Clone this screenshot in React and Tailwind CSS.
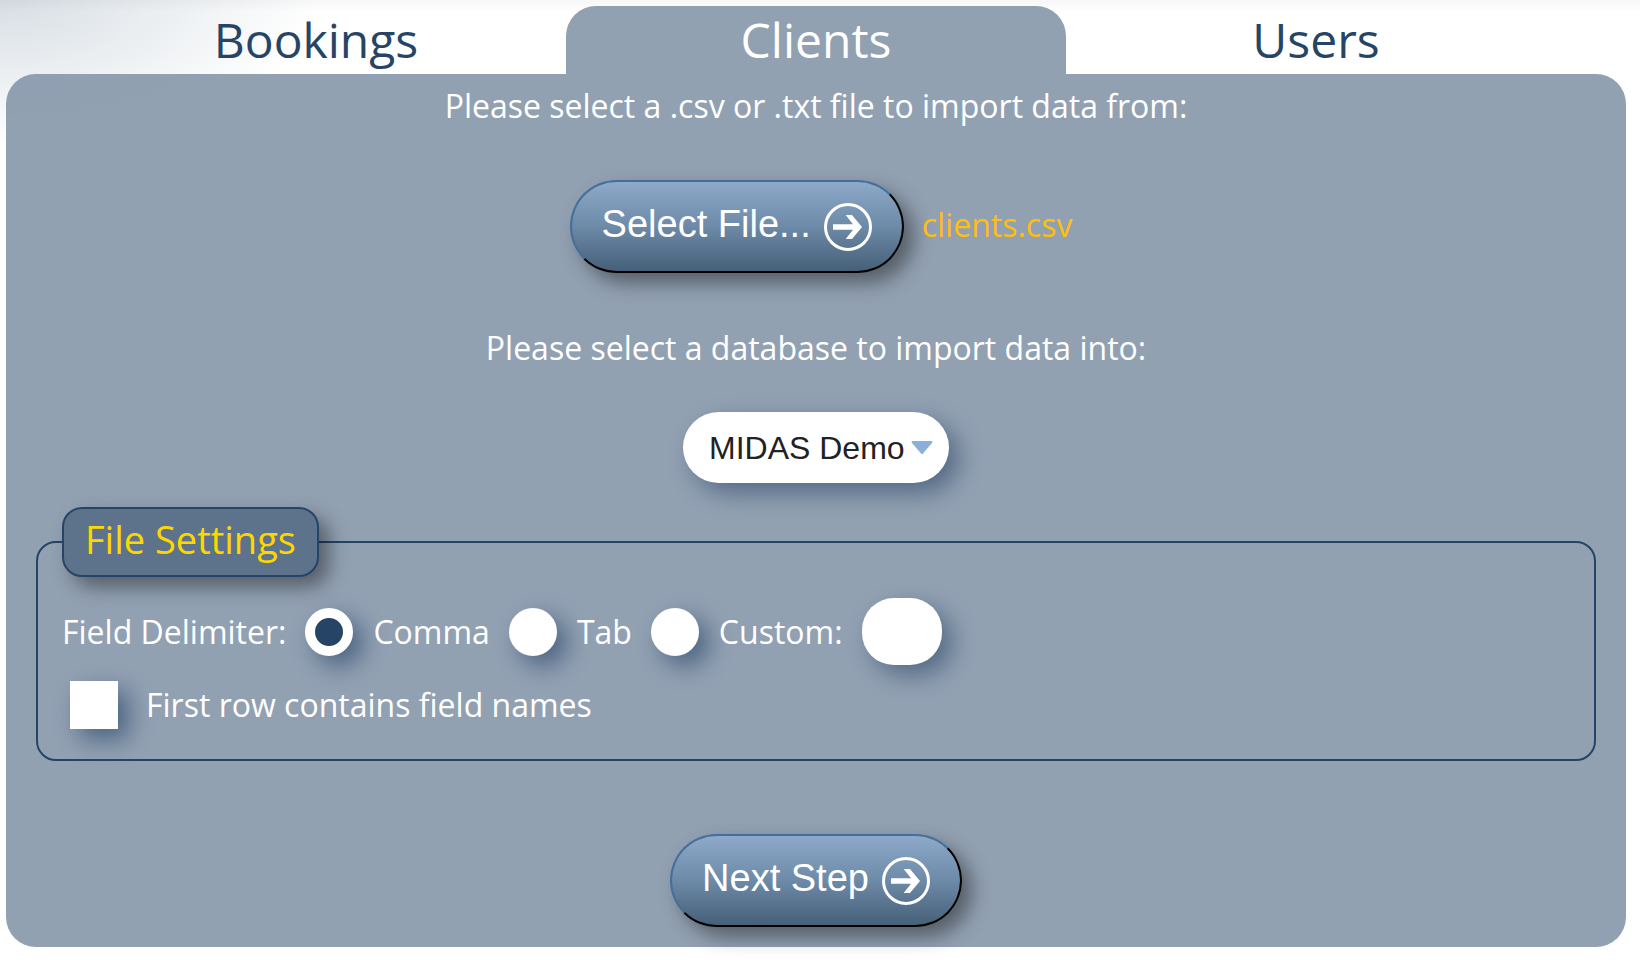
import React, { useState } from "react";

const TABS = ["Bookings", "Clients", "Users"];

const ArrowIcon = () => (
  <svg viewBox="0 0 48 48" className="size-12 shrink-0" fill="none" aria-hidden="true">
    <circle cx="24" cy="24" r="22.5" stroke="white" strokeWidth="3" />
    <path d="M9 21.2h20L21.700 12H28l10 12-10 12h-6.300L29 26.800H9z" fill="white" />
  </svg>
);

const ActionButton = ({ children, ...props }) => (
  <button
    type="button"
    className="flex items-center gap-[13px] h-[93px] px-[30px] rounded-full border-2 border-t-[#446e9b] border-l-[#446e9b] border-r-black border-b-black bg-linear-to-b from-[#8ea9c9] via-[#6d8aa8] to-[#466079] font-['Liberation_Sans',Arial,sans-serif] text-[38px] leading-none text-white shadow-[10px_10px_20px_rgba(0,0,0,0.42)] cursor-pointer"
    {...props}
  >
    <span className="pb-1.5">{children}</span>
    <ArrowIcon />
  </button>
);

const Radio = ({ label, ...props }) => (
  <label className="flex items-center gap-5">
    <input
      type="radio"
      name="delimiter"
      className="appearance-none size-12 rounded-full border-10 border-white bg-white checked:bg-[#264566] shadow-[10px_10px_25px_#4a6280]"
      {...props}
    />
    <span>{label}</span>
  </label>
);

const App = () => {
  const [tab, setTab] = useState("Clients");
  const [delimiter, setDelimiter] = useState("comma");
  const [custom, setCustom] = useState("");
  const [hasHeader, setHasHeader] = useState(false);

  return (
    <div className="min-h-screen pt-1.5 pl-1.5 pr-3.5 pb-3 bg-white bg-[linear-gradient(rgba(0,0,0,0.03),transparent_12px),radial-gradient(ellipse_320px_145px_at_0_0,#d7dee4,#ffffff)] font-['Open_Sans',sans-serif] text-[32px] leading-11 text-white">
      <nav className="flex px-15">
        {TABS.map((t) => (
          <button
            key={t}
            type="button"
            onClick={() => setTab(t)}
            className={`flex-1 h-17 rounded-t-[30px] text-5xl leading-17 cursor-pointer ${
              t === tab ? "bg-[#92a1b2] text-white" : "text-[#264566]"
            }`}
          >
            {t}
          </button>
        ))}
      </nav>

      <main className="flex flex-col items-center rounded-[30px] bg-[rgba(127,144,164,0.85)] px-[30px] pt-[10px] pb-5">
        <p>Please select a .csv or .txt file to import data from:</p>

        <div className="flex items-center gap-[18px] mt-[52px] pl-[10px]">
          <ActionButton>Select File...</ActionButton>
          <span className="pb-1 text-[#ffbf0b]">clients.csv</span>
        </div>

        <label htmlFor="database" className="mt-[53px]">
          Please select a database to import data into:
        </label>
        <div className="relative mt-[42px]">
          <select
            id="database"
            className="appearance-none h-[71px] pl-[26px] pr-11 rounded-full bg-white font-['Liberation_Sans',Arial,sans-serif] text-[#222] shadow-[10px_10px_25px_#546a85]"
          >
            <option>MIDAS Demo</option>
          </select>
          <svg viewBox="0 0 22 13" className="absolute right-4 top-[29px] w-[22px] h-[13px] pointer-events-none" aria-hidden="true">
            <path d="M1.500 0h19q1.500.5.500 2l-9 10.500q-1 1-2 0L1 2Q0 .5 1.500 0z" fill="#8aafdb" />
          </svg>
        </div>

        <fieldset className="self-stretch mt-6 rounded-[20px] border-2 border-[#264566] px-6 pb-[30px]">
          <legend className="h-[70px] px-[21px] rounded-[20px] border-2 border-[#264566] bg-[#5d738b] text-[38px] leading-[60px] text-[#ffd700] shadow-[10px_10px_20px_rgba(0,0,0,0.42)]">
            File Settings
          </legend>
          <div className="flex items-center gap-[19px] mt-[21px]">
            <span>Field Delimiter:</span>
            <Radio label="Comma" checked={delimiter === "comma"} onChange={() => setDelimiter("comma")} />
            <Radio label="Tab" checked={delimiter === "tab"} onChange={() => setDelimiter("tab")} />
            <Radio label="Custom:" checked={delimiter === "custom"} onChange={() => setDelimiter("custom")} />
            <input
              type="text"
              aria-label="Custom delimiter"
              maxLength={1}
              value={custom}
              onChange={(e) => setCustom(e.target.value)}
              className="w-20 h-[67px] rounded-[32px] bg-white text-center text-[#222] shadow-[10px_10px_25px_#546a85]"
            />
          </div>
          <label className="flex w-fit items-center gap-7 mt-4 pl-2">
            <input
              type="checkbox"
              checked={hasHeader}
              onChange={(e) => setHasHeader(e.target.checked)}
              className="appearance-none size-12 border-10 border-white bg-white checked:bg-[#264566] shadow-[10px_10px_25px_#4a6280]"
            />
            First row contains field names
          </label>
        </fieldset>

        <div className="mt-[73px]">
          <ActionButton>Next Step</ActionButton>
        </div>
      </main>
    </div>
  );
};

export default App;
